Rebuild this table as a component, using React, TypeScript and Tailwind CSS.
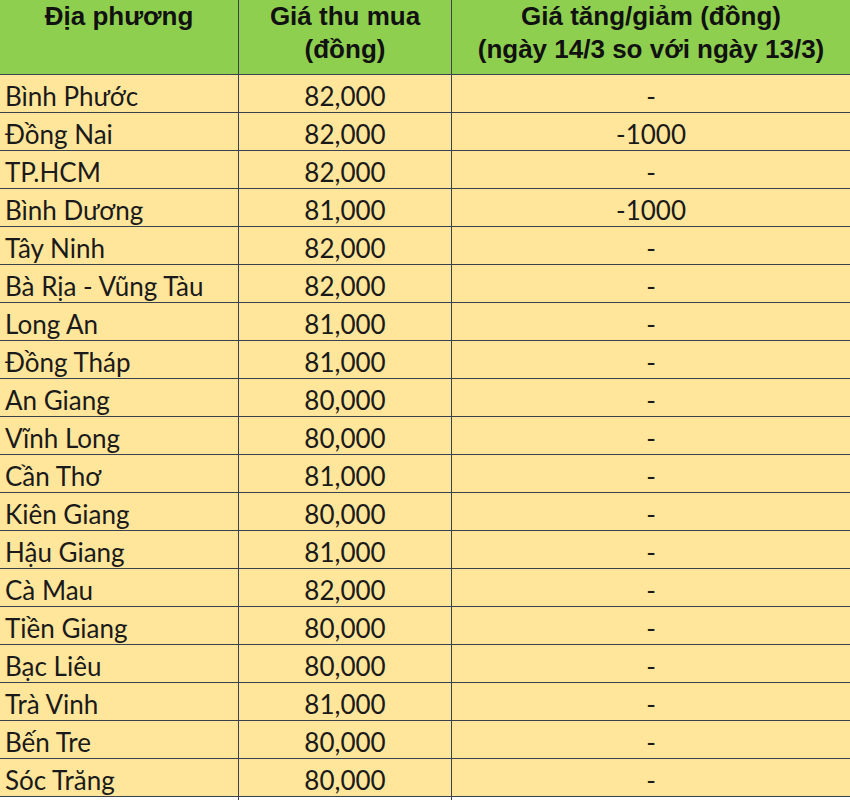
const rows: [string, string, string][] = [
  ['Bình Phước', '82,000', '-'],
  ['Đồng Nai', '82,000', '-1000'],
  ['TP.HCM', '82,000', '-'],
  ['Bình Dương', '81,000', '-1000'],
  ['Tây Ninh', '82,000', '-'],
  ['Bà Rịa - Vũng Tàu', '82,000', '-'],
  ['Long An', '81,000', '-'],
  ['Đồng Tháp', '81,000', '-'],
  ['An Giang', '80,000', '-'],
  ['Vĩnh Long', '80,000', '-'],
  ['Cần Thơ', '81,000', '-'],
  ['Kiên Giang', '80,000', '-'],
  ['Hậu Giang', '81,000', '-'],
  ['Cà Mau', '82,000', '-'],
  ['Tiền Giang', '80,000', '-'],
  ['Bạc Liêu', '80,000', '-'],
  ['Trà Vinh', '81,000', '-'],
  ['Bến Tre', '80,000', '-'],
  ['Sóc Trăng', '80,000', '-'],
]

export default function App() {
  return (
    <div className="w-[850px] h-[800px] overflow-hidden bg-white">
      <div className="grid grid-cols-[239px_213px_1fr] h-[75px] bg-[#8fcf50] border-b border-[#3b4150] font-['Liberation_Sans',Arial,sans-serif] font-bold text-[26px] leading-[33px] text-[#111]">
        <div className="border-r border-[#3b4150] text-center">Địa phương</div>
        <div className="border-r border-[#3b4150] text-center">
          Giá thu mua
          <br />
          (đồng)
        </div>
        <div className="text-center">
          Giá tăng/giảm (đồng)
          <br />
          (ngày 14/3 so với ngày 13/3)
        </div>
      </div>
      {rows.map(([name, price, diff]) => (
        <div
          key={name}
          className="grid grid-cols-[239px_213px_1fr] h-[38px] bg-[#ffe69b] border-b border-[#3b4150] font-['Lato','Open_Sans',sans-serif] text-[26px] text-[#1a1a1a]"
        >
          <div className="border-r border-[#3b4150] flex items-center pl-[5px] pt-[2px]">{name}</div>
          <div className="border-r border-[#3b4150] flex items-center justify-center pt-[2px]">{price}</div>
          <div className="flex items-center justify-center pt-[2px]">{diff}</div>
        </div>
      ))}
    </div>
  )
}
